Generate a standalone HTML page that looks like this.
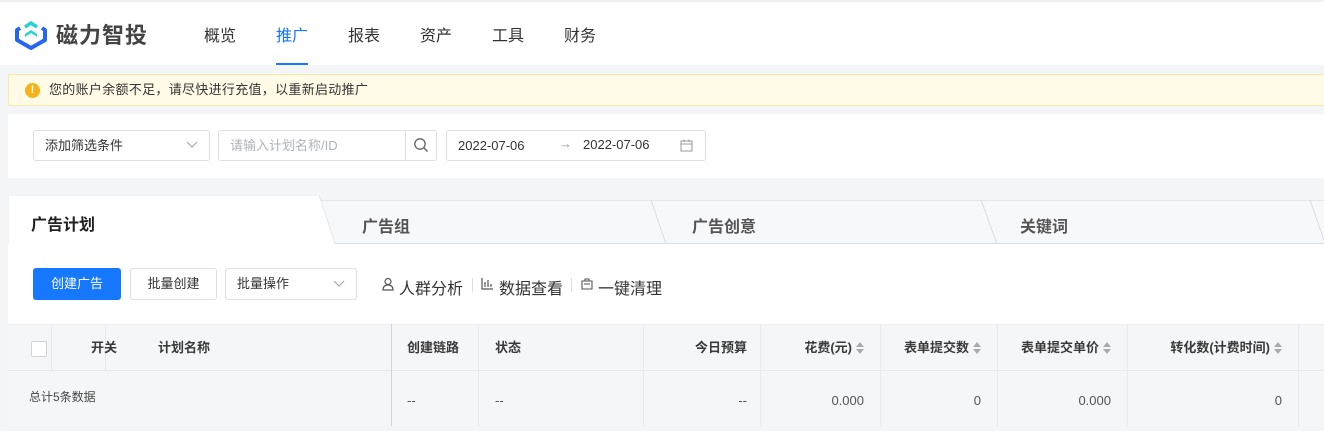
<!DOCTYPE html>
<html><head><meta charset="utf-8"><style>
*{box-sizing:border-box;margin:0;padding:0}
body{width:1324px;height:426px;overflow:hidden;background:#f4f5f7;font-family:"Liberation Sans","Noto Sans CJK SC",sans-serif;color:#333;position:relative}
.abs{position:absolute}
.hdr{left:0;top:0;width:1324px;height:65px;background:#fff;border-top:2px solid #eef0f3}
.nav{top:22px;font-size:16px;color:#333}
.warn{left:8px;top:74px;width:1320px;height:32px;background:#fffbe6;border:1px solid #fbe7a6;border-radius:2px;font-size:13px;line-height:30px;padding-left:40px;color:#333;letter-spacing:0.3px}
.panel{background:#fff}
.box{border:1px solid #dcdfe6;border-radius:3px;background:#fff;font-size:13px;line-height:29px;padding-left:11px}
.th{top:324px;height:47px;line-height:47px;font-size:13px;font-weight:bold;color:#3a3a3a}
.td{top:371px;height:55px;line-height:60px;font-size:13px;color:#555}
.vl{top:324px;width:1px;height:102px;background:#e8e9ec}
.sort{display:inline-block;width:8px;vertical-align:middle;margin-left:4px;position:relative;top:-1px}
</style></head><body>
<div class="abs hdr"></div>
<svg class="abs" style="left:14px;top:18px" width="34" height="32" viewBox="0 0 34 32">
<path d="M6 10 L3 12 V22 L17 30 L31 22 V12 L28 10" fill="none" stroke="#2566f5" stroke-width="4" stroke-linejoin="round"/>
<path d="M11 9 L17 5 L23 9" fill="none" stroke="#26d3d3" stroke-width="3.5"/>
<path d="M11 16 L17 12 L23 16 L23 19 L17 15 L11 19Z" fill="#26d3d3"/>
</svg>
<div class="abs" style="left:56px;top:18px;font-size:22px;font-weight:bold;color:#444;letter-spacing:1px">磁力智投</div>
<div class="abs nav" style="left:204px">概览</div>
<div class="abs nav" style="left:276px;color:#1677ff">推广</div>
<div class="abs" style="left:276px;top:63px;width:32px;height:2px;background:#1677ff"></div>
<div class="abs nav" style="left:348px">报表</div>
<div class="abs nav" style="left:420px">资产</div>
<div class="abs nav" style="left:492px">工具</div>
<div class="abs nav" style="left:564px">财务</div>

<div class="abs warn">您的账户余额不足，请尽快进行充值，以重新启动推广</div>
<div class="abs" style="left:25px;top:83px;width:15px;height:15px;border-radius:50%;background:#f5b21b;color:#fff;font-size:11px;font-weight:bold;text-align:center;line-height:15px">!</div>

<div class="abs panel" style="left:8px;top:114px;width:1316px;height:64px"></div>
<div class="abs box" style="left:33px;top:130px;width:177px;height:31px">添加筛选条件</div>
<svg class="abs" style="left:186px;top:141px" width="12" height="8"><path d="M1 1 L6 6 L11 1" fill="none" stroke="#aaa" stroke-width="1.2"/></svg>
<div class="abs box" style="left:218px;top:130px;width:219px;height:31px;color:#b0b3b8">请输入计划名称/ID</div>
<div class="abs" style="left:405px;top:131px;width:1px;height:29px;background:#dcdfe6"></div>
<svg class="abs" style="left:413px;top:137px" width="16" height="16"><circle cx="7" cy="7" r="5.2" fill="none" stroke="#666" stroke-width="1.3"/><path d="M11 11 L14.5 14.5" stroke="#666" stroke-width="1.4"/></svg>
<div class="abs box" style="left:446px;top:130px;width:260px;height:31px">2022-07-06</div>
<div class="abs" style="left:559px;top:136px;font-size:13px;color:#999">→</div>
<div class="abs" style="left:583px;top:137px;font-size:13px">2022-07-06</div>
<svg class="abs" style="left:680px;top:139px" width="13" height="13"><rect x="1" y="2" width="11" height="10" fill="none" stroke="#999"/><path d="M1 5 H12 M4 0.5 V3 M9 0.5 V3" stroke="#999"/></svg>

<div class="abs" style="left:8px;top:200px;width:1316px;height:44px;background:#f7f8fa;border-top:1px solid #e4e6eb;border-bottom:1px solid #d8dce5"></div>
<svg class="abs" style="left:8px;top:195px" width="1316" height="50">
<path d="M0 50 V0 H311 L327 48 V50Z" fill="#fff" stroke="#e4e6eb"/>
<path d="M643 5 L658 49 M973 5 L989 49 M1302 5 L1316 45" stroke="#d8dce5" fill="none"/>
</svg>
<div class="abs" style="left:31px;top:211px;font-size:16px;font-weight:bold;color:#222">广告计划</div>
<div class="abs" style="left:362px;top:213px;font-size:16px;font-weight:bold;color:#555">广告组</div>
<div class="abs" style="left:692px;top:213px;font-size:16px;font-weight:bold;color:#555">广告创意</div>
<div class="abs" style="left:1020px;top:213px;font-size:16px;font-weight:bold;color:#555">关键词</div>

<div class="abs panel" style="left:8px;top:244px;width:1316px;height:80px"></div>
<div class="abs" style="left:33px;top:268px;width:88px;height:32px;background:#1677ff;border-radius:3px;color:#fff;font-size:13px;text-align:center;line-height:32px">创建广告</div>
<div class="abs box" style="left:130px;top:268px;width:87px;height:32px;text-align:center;padding:0;line-height:30px">批量创建</div>
<div class="abs box" style="left:225px;top:268px;width:132px;height:32px;line-height:30px">批量操作</div>
<svg class="abs" style="left:333px;top:280px" width="12" height="8"><path d="M1 1 L6 6 L11 1" fill="none" stroke="#aaa" stroke-width="1.2"/></svg>
<svg class="abs" style="left:382px;top:277px" width="12" height="14"><circle cx="6" cy="4.5" r="3" fill="none" stroke="#555" stroke-width="1.2"/><path d="M1 13 Q1 8 6 8 Q11 8 11 13Z" fill="none" stroke="#555" stroke-width="1.2"/></svg>
<div class="abs" style="left:399px;top:275px;font-size:16px">人群分析</div>
<div class="abs" style="left:472px;top:278px;width:1px;height:14px;background:#ddd"></div>
<svg class="abs" style="left:481px;top:278px" width="12" height="12"><path d="M1 0 V11 H12 M4 4 V9 M7 2 V9 M10 6 V9" fill="none" stroke="#555" stroke-width="1.2"/></svg>
<div class="abs" style="left:499px;top:275px;font-size:16px">数据查看</div>
<div class="abs" style="left:571px;top:278px;width:1px;height:14px;background:#ddd"></div>
<svg class="abs" style="left:581px;top:278px" width="12" height="12"><path d="M4 3 V1 H8 V3 M1 3 H11 V11 H1Z M3 6 H9" fill="none" stroke="#555" stroke-width="1.1"/></svg>
<div class="abs" style="left:598px;top:275px;font-size:16px">一键清理</div>

<div class="abs" style="left:8px;top:324px;width:1316px;height:102px;background:#f5f6f8"></div>
<div class="abs" style="left:8px;top:370px;width:1316px;height:1px;background:#e8e9ec"></div>
<div class="abs" style="left:8px;top:324px;width:1316px;height:1px;background:#eceef1"></div>
<div class="abs" style="left:51px;top:324px;width:1px;height:46px;background:#e8e9ec"></div>
<div class="abs" style="left:105px;top:324px;width:1px;height:46px;background:#e8e9ec"></div>
<div class="abs" style="left:391px;top:324px;width:1px;height:102px;background:#d0d3d8"></div>
<div class="abs vl" style="left:478px"></div>
<div class="abs vl" style="left:643px"></div>
<div class="abs vl" style="left:760px"></div>
<div class="abs vl" style="left:880px"></div>
<div class="abs vl" style="left:997px"></div>
<div class="abs vl" style="left:1127px"></div>
<div class="abs vl" style="left:1298px"></div>
<div class="abs" style="left:31px;top:341px;width:16px;height:16px;border:1px solid #d0d3d8;border-radius:2px;background:#fff"></div>
<div class="abs th" style="left:91px">开关</div>
<div class="abs th" style="left:158px">计划名称</div>
<div class="abs th" style="left:407px">创建链路</div>
<div class="abs th" style="left:495px">状态</div>
<div class="abs th" style="left:643px;width:104px;text-align:right">今日预算</div>
<svg width="0" height="0" style="position:absolute"><defs><g id="s"><path d="M0 5 L4 0 L8 5Z M0 7 L8 7 L4 12Z" fill="#aaa"/></g></defs></svg>
<div class="abs th" style="left:760px;width:104px;text-align:right">花费(元)<svg class="sort" width="8" height="12"><use href="#s"/></svg></div>
<div class="abs th" style="left:880px;width:101px;text-align:right">表单提交数<svg class="sort" width="8" height="12"><use href="#s"/></svg></div>
<div class="abs th" style="left:997px;width:114px;text-align:right">表单提交单价<svg class="sort" width="8" height="12"><use href="#s"/></svg></div>
<div class="abs th" style="left:1127px;width:155px;text-align:right">转化数(计费时间)<svg class="sort" width="8" height="12"><use href="#s"/></svg></div>
<div class="abs" style="left:29px;top:388px;font-size:12px;color:#444">总计5条数据</div>
<div class="abs td" style="left:407px">--</div>
<div class="abs td" style="left:495px">--</div>
<div class="abs td" style="left:643px;width:104px;text-align:right">--</div>
<div class="abs td" style="left:760px;width:104px;text-align:right">0.000</div>
<div class="abs td" style="left:880px;width:101px;text-align:right">0</div>
<div class="abs td" style="left:997px;width:114px;text-align:right">0.000</div>
<div class="abs td" style="left:1127px;width:155px;text-align:right">0</div>
</body></html>
